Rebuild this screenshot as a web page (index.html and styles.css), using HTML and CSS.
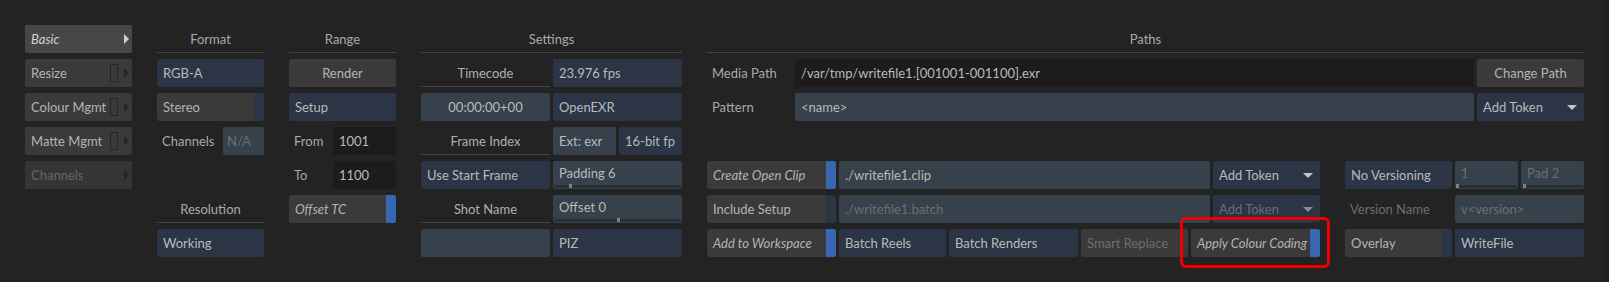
FILE: index.html
```html
<!DOCTYPE html>
<html lang="en">
<head>
  <meta charset="UTF-8">
  <title>Write File - Basic</title>
  <link rel="stylesheet" href="styles.css">
</head>
<body>
  <div class="panel">

    <div class="col nav">
      <div class="navbtn active"><span class="it">Basic</span><span class="arrow"></span></div>
      <div class="navbtn"><span>Resize</span><span class="box"></span><span class="arrow"></span></div>
      <div class="navbtn"><span>Colour Mgmt</span><span class="box"></span><span class="arrow"></span></div>
      <div class="navbtn"><span>Matte Mgmt</span><span class="box"></span><span class="arrow"></span></div>
      <div class="navbtn off"><span>Channels</span><span class="arrow"></span></div>
    </div>

    <div class="col format">
      <div class="head">Format</div>
      <div class="fld blue">RGB-A</div>
      <div class="toggle"><div class="btn">Stereo</div><div class="strip"></div></div>
      <div class="row"><span class="lbl">Channels</span><div class="fld slate dim na">N/A</div></div>
      <div></div>
      <div class="head">Resolution</div>
      <div class="fld blue">Working</div>
    </div>

    <div class="col range">
      <div class="head">Range</div>
      <div class="btn center">Render</div>
      <div class="fld blue">Setup</div>
      <div class="row"><span class="lbl wide">From</span><div class="fld dark">1001</div></div>
      <div class="row"><span class="lbl wide">To</span><div class="fld dark">1100</div></div>
      <div class="toggle"><div class="btn it">Offset TC</div><div class="strip on"></div></div>
    </div>

    <div class="col settings">
      <div class="head span2">Settings</div>
      <div class="head sub">Timecode</div>
      <div class="fld blue">23.976 fps</div>
      <div class="fld slate center">00:00:00+00</div>
      <div class="fld blue">OpenEXR</div>
      <div class="head sub">Frame Index</div>
      <div class="pair">
        <div class="fld slate">Ext: exr</div>
        <div class="fld blue">16-bit fp</div>
      </div>
      <div class="fld blue">Use Start Frame</div>
      <div class="fld slate slider"><span>Padding 6</span><i class="track"><b style="left: 15px"></b></i></div>
      <div class="head sub">Shot Name</div>
      <div class="fld slate slider"><span>Offset 0</span><i class="track"><b style="left: 63px"></b></i></div>
      <div class="fld slate"></div>
      <div class="fld blue">PIZ</div>
    </div>

    <div class="col paths">
      <div class="head">Paths</div>
      <div class="row">
        <span class="lbl path">Media Path</span>
        <div class="fld dark grow">/var/tmp/writefile1.[001001-001100].exr</div>
        <div class="btn center w107">Change Path</div>
      </div>
      <div class="row">
        <span class="lbl path">Pattern</span>
        <div class="fld slate grow">&lt;name&gt;</div>
        <div class="fld blue drop w107">Add Token<span class="tri"></span></div>
      </div>
      <div></div>
      <div class="row">
        <div class="toggle w129"><div class="btn it">Create Open Clip</div><div class="strip on"></div></div>
        <div class="fld slate grow">./writefile1.clip</div>
        <div class="fld blue drop w107">Add Token<span class="tri"></span></div>
        <div class="fld blue w107 sep">No Versioning</div>
        <div class="pair w129">
          <div class="fld slate slider dim"><span>1</span><i class="track"><b style="left: 0"></b></i></div>
          <div class="fld slate slider dim"><span>Pad 2</span><i class="track"><b style="left: 1px"></b></i></div>
        </div>
      </div>
      <div class="row">
        <div class="toggle w129"><div class="btn">Include Setup</div><div class="strip"></div></div>
        <div class="fld slate grow dim">./writefile1.batch</div>
        <div class="fld blue drop w107 dim">Add Token<span class="tri"></span></div>
        <span class="lbl vname sep dim">Version Name</span>
        <div class="fld slate w129 dim">v&lt;version&gt;</div>
      </div>
      <div class="row">
        <div class="toggle w129"><div class="btn it">Add to Workspace</div><div class="strip on"></div></div>
        <div class="fld blue w107">Batch Reels</div>
        <div class="fld blue w129">Batch Renders</div>
        <div class="btn w107 dim">Smart Replace</div>
        <div class="toggle w129"><div class="btn it">Apply Colour Coding</div><div class="strip on"></div></div>
        <div class="toggle w107 sep"><div class="btn">Overlay</div><div class="strip"></div></div>
        <div class="fld blue w129">WriteFile</div>
      </div>
    </div>

    <div class="callout"></div>
  </div>
</body>
</html>
```

FILE: styles.css
```css
body {
  margin: 0;
  background: #232323;
  font-family: Lato, "Liberation Sans", sans-serif;
  font-size: 13px;
  color: #b8babd;
}
.panel {
  position: relative;
  display: flex;
  align-items: flex-start;
  gap: 25px;
  padding: 25px 0 0 25px;
  height: 282px;
  box-sizing: border-box;
  border-right: 4px solid #1f1f1f;
  width: 1609px;
}
.col {
  display: grid;
  grid-auto-rows: 28px;
  row-gap: 6px;
  width: 107px;
}
.settings {
  width: 261px;
  grid-template-columns: 129px 129px;
  column-gap: 3px;
}
.paths {
  width: 877px;
}
.span2 {
  grid-column: span 2;
}

/* generic cells */
.fld, .btn, .navbtn {
  display: flex;
  align-items: center;
  border-radius: 2px;
  padding: 0 6px;
  white-space: nowrap;
  overflow: hidden;
  min-width: 0;
  box-sizing: border-box;
}
.btn {
  background: #3a3a3a;
  color: #b4b4b4;
}
.blue { background: #2b3545; }
.slate { background: #37414b; }
.dark { background: #1c1c1c; }
.center { justify-content: center; }
.it { font-style: italic; }
.dim { color: #6a6e72; }
.grow { flex: 1; }
.w107 { width: 107px; flex: none; }
.w129 { width: 129px; flex: none; }
.sep { margin-left: 22px; }

.head {
  display: flex;
  align-items: center;
  justify-content: center;
  border-bottom: 1px solid #444;
  color: #a9a9a9;
  box-sizing: border-box;
  padding-top: 1px;
}
.head.sub {
  color: #b0b0b0;
}

.row {
  display: flex;
  gap: 3px;
  align-items: stretch;
}
.lbl {
  display: flex;
  align-items: center;
  padding-left: 5px;
  color: #a8a8a8;
  width: 63px;
  box-sizing: border-box;
  flex: none;
  white-space: nowrap;
}
.lbl.wide { width: 41px; }
.lbl.path { width: 85px; }
.lbl.vname { width: 107px; }
.lbl.dim { color: #6a6e72; }
.row .fld { flex: 1; }
.row .fld.w107, .row .fld.w129 { flex: none; }
.na { padding-left: 4px; }

.pair {
  display: grid;
  grid-template-columns: 1fr 1fr;
  gap: 3px;
}

/* toggle button with state strip */
.toggle {
  display: flex;
  border-radius: 2px;
  overflow: hidden;
}
.toggle .btn {
  flex: 1;
  border-radius: 2px 0 0 2px;
}
.strip {
  width: 10px;
  background: #2b3545;
}
.strip.on {
  background: #3767b3;
}

/* slider fields */
.slider {
  position: relative;
  align-items: flex-start;
  padding-top: 4px;
}
.slider .track {
  position: absolute;
  left: 1px;
  right: 1px;
  bottom: 1px;
  height: 3px;
  background: #272f38;
}
.slider .track b {
  position: absolute;
  bottom: 0;
  width: 3px;
  height: 4px;
  background: #7d8186;
}

/* dropdown */
.drop {
  position: relative;
}
.tri {
  position: absolute;
  right: 7px;
  top: 12px;
  border-left: 5px solid transparent;
  border-right: 5px solid transparent;
  border-top: 5px solid #c4c6c8;
}
.drop.dim .tri {
  border-top-color: #8a8e92;
}

/* left navigation */
.navbtn {
  background: #3a3a3a;
  color: #b4b4b4;
  padding: 0 3px 0 6px;
  gap: 0;
}
.navbtn span:first-child {
  flex: 1;
}
.navbtn.active {
  background: #474747;
  color: #d2d2d2;
}
.navbtn.off {
  background: #353535;
  color: #666;
}
.box {
  width: 6px;
  height: 16px;
  border: 1px solid #262626;
  margin-right: 6px;
}
.arrow {
  width: 0;
  height: 0;
  border-top: 5px solid transparent;
  border-bottom: 5px solid transparent;
  border-left: 5px solid #262626;
}
.active .arrow {
  border-left-color: #cfcfcf;
}

/* red highlight drawn over the colour coding button */
.callout {
  position: absolute;
  left: 1180px;
  top: 217px;
  width: 150px;
  height: 51px;
  border: 3px solid #ee0000;
  border-radius: 6px;
  box-sizing: border-box;
}
```
